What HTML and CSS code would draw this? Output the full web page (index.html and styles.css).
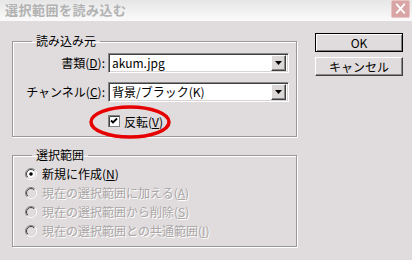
FILE: index.html
```html
<!DOCTYPE html>
<html lang="ja">
<head>
    <meta charset="UTF-8">
    <title>選択範囲を読み込む</title>
    <link rel="stylesheet" href="styles.css">
</head>
<body>
    <div class="titlebar">
        <span class="title">選択範囲を読み込む</span>
        <span class="close">
            <svg width="18" height="18" viewBox="0 0 18 18"><path d="M5 4 L13 13 M13 4 L5 13" stroke="#fff" stroke-width="2" stroke-linecap="round"/></svg>
        </span>
    </div>

    <div class="content">
        <div class="main">
            <fieldset class="group">
                <legend>読み込み元</legend>
                <div class="field-grid">
                    <label>書類(<u>D</u>):</label>
                    <div class="select">
                        <span class="value">akum.jpg</span>
                        <span class="arrow"><svg width="7" height="4" viewBox="0 0 7 4"><path d="M0 0 H7 L3.5 4 Z" fill="#000"/></svg></span>
                    </div>
                    <label>チャンネル(<u>C</u>):</label>
                    <div class="select">
                        <span class="value">背景/ブラック(K)</span>
                        <span class="arrow"><svg width="7" height="4" viewBox="0 0 7 4"><path d="M0 0 H7 L3.5 4 Z" fill="#000"/></svg></span>
                    </div>
                    <div class="check-row">
                        <svg class="checkbox" width="12" height="12" viewBox="0 0 12 12">
                            <rect x="0.5" y="0.5" width="11" height="11" fill="#fff" stroke="#808080"/>
                            <path d="M1.5 11.5 V1.5 H11.5" fill="none" stroke="#404040"/>
                            <path d="M3 5.5 L5 7.5 L9 3.5" fill="none" stroke="#000" stroke-width="1.8"/>
                        </svg>
                        <span>反転(<u>V</u>)</span>
                        <svg class="mark" width="90" height="40" viewBox="0 0 90 40"><ellipse cx="44" cy="20" rx="39" ry="15" fill="none" stroke="#e60000" stroke-width="3.5"/></svg>
                    </div>
                </div>
            </fieldset>

            <fieldset class="group selection">
                <legend>選択範囲</legend>
                <div class="radio-row">
                    <svg class="radio" width="12" height="12" viewBox="0 0 12 12">
                        <defs>
                            <linearGradient id="rim" x1="0" y1="0" x2="1" y2="1">
                                <stop offset="0.45" stop-color="#808080"/>
                                <stop offset="0.55" stop-color="#ffffff"/>
                            </linearGradient>
                            <linearGradient id="rim2" x1="0" y1="0" x2="1" y2="1">
                                <stop offset="0.45" stop-color="#404040"/>
                                <stop offset="0.55" stop-color="#d8d4d4"/>
                            </linearGradient>
                        </defs>
                        <circle cx="6" cy="6" r="5.5" fill="none" stroke="url(#rim)"/>
                        <circle cx="6" cy="6" r="4.5" fill="#fff" stroke="url(#rim2)"/>
                        <circle cx="6" cy="6" r="1.8" fill="#000"/>
                    </svg>
                    <span>新規に作成(<u>N</u>)</span>
                </div>
                <div class="radio-row disabled">
                    <svg class="radio" width="12" height="12" viewBox="0 0 12 12">
                        <circle cx="6" cy="6" r="5.5" fill="none" stroke="url(#rim)"/>
                        <circle cx="6" cy="6" r="4.5" fill="#e0dcdd" stroke="url(#rim2)"/>
                    </svg>
                    <span>現在の選択範囲に加える(<u>A</u>)</span>
                </div>
                <div class="radio-row disabled">
                    <svg class="radio" width="12" height="12" viewBox="0 0 12 12">
                        <circle cx="6" cy="6" r="5.5" fill="none" stroke="url(#rim)"/>
                        <circle cx="6" cy="6" r="4.5" fill="#e0dcdd" stroke="url(#rim2)"/>
                    </svg>
                    <span>現在の選択範囲から削除(<u>S</u>)</span>
                </div>
                <div class="radio-row disabled">
                    <svg class="radio" width="12" height="12" viewBox="0 0 12 12">
                        <circle cx="6" cy="6" r="5.5" fill="none" stroke="url(#rim)"/>
                        <circle cx="6" cy="6" r="4.5" fill="#e0dcdd" stroke="url(#rim2)"/>
                    </svg>
                    <span>現在の選択範囲との共通範囲(<u>I</u>)</span>
                </div>
            </fieldset>
        </div>

        <div class="buttons">
            <button class="btn default">OK</button>
            <button class="btn">キャンセル</button>
        </div>
    </div>
</body>
</html>
```

FILE: styles.css
```css
* {
    margin: 0;
    padding: 0;
    box-sizing: border-box;
    font-family: "Noto Sans CJK JP", "Liberation Sans", sans-serif;
}

body {
    width: 412px;
    height: 260px;
    background: #e0dcdd;
    font-size: 12px;
    color: #000;
    overflow: hidden;
}

.titlebar {
    height: 21px;
    display: flex;
    justify-content: space-between;
    align-items: flex-start;
    padding-left: 5px;
    background: linear-gradient(#e6e6e6, #fbfbfb);
}

.title {
    font-size: 13px;
    font-weight: bold;
    line-height: 19px;
    letter-spacing: 0.5px;
    color: #b2b2b2;
}

.close {
    width: 19px;
    height: 18px;
    margin-right: 2px;
    background: #d9a4a4;
    border: 1px solid #e8c4c4;
    border-radius: 2px;
    display: flex;
    align-items: center;
    justify-content: center;
}

.content {
    display: flex;
    padding: 12px 0 0 12px;
}

.main {
    width: 285px;
}

.group {
    width: 285px;
    border: 1px solid #9a9898;
    box-shadow: inset 1px 1px 0 #fff, 1px 1px 0 #fff;
    padding: 0 0 5px 0;
    min-width: 0;
}

.group legend {
    margin-left: 19px;
    padding: 0 4px;
    line-height: 16px;
    font-size: 12px;
}

.field-grid {
    display: grid;
    grid-template-columns: 92px 181px;
    column-gap: 3px;
    row-gap: 9px;
    margin-top: 4px;
    align-items: center;
}

.field-grid label {
    text-align: right;
    line-height: 20px;
}

.select {
    height: 20px;
    display: flex;
    align-items: center;
    background: #fff;
    border: 1px solid;
    border-color: #888 #fff #fff #888;
    box-shadow: inset 1px 1px 0 #404040, inset -1px -1px 0 #d8d4d4;
    padding: 1px;
}

.select .value {
    flex: 1;
    padding-left: 2px;
    line-height: 16px;
}

.arrow {
    width: 15px;
    height: 16px;
    margin-right: 1px;
    background: #dcd8d8;
    border: 1px solid;
    border-color: #fff #404040 #404040 #fff;
    box-shadow: inset -1px -1px 0 #888;
    display: flex;
    align-items: center;
    justify-content: center;
}

.check-row {
    grid-column: 2;
    height: 20px;
    display: flex;
    align-items: center;
    gap: 4px;
    position: relative;
}

.mark {
    position: absolute;
    left: -22px;
    top: -9px;
}

.selection {
    margin-top: 10px;
    padding-bottom: 6px;
}

.radio-row {
    height: 19px;
    display: flex;
    align-items: center;
    gap: 5px;
    padding-left: 12px;
}

.radio-row:first-of-type {
    margin-top: 1px;
}

.disabled span {
    color: #aaa6a6;
    text-shadow: 1px 1px 0 #fff;
}

.buttons {
    margin-left: 18px;
    display: flex;
    flex-direction: column;
    gap: 5px;
}

.btn {
    width: 88px;
    height: 19px;
    font-size: 12px;
    line-height: 15px;
    background: #e0dcdd;
    border: 1px solid;
    border-color: #fff #404040 #404040 #fff;
    box-shadow: inset -1px -1px 0 #888;
}

.btn.default {
    border: 1px solid #000;
    box-shadow: inset 1px 1px 0 #fff, inset -1px -1px 0 #808080;
}
```
